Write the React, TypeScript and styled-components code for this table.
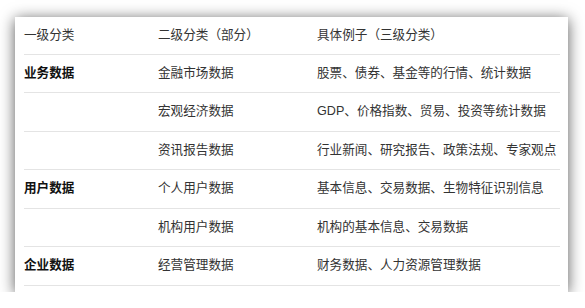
import React from 'react';
import styled, { createGlobalStyle } from 'styled-components';

type RowData = {
   level1?: string;
   level2: string;
   examples: string;
};

const rows: RowData[] = [
   { level1: '业务数据', level2: '金融市场数据', examples: '股票、债券、基金等的行情、统计数据' },
   { level2: '宏观经济数据', examples: 'GDP、价格指数、贸易、投资等统计数据' },
   { level2: '资讯报告数据', examples: '行业新闻、研究报告、政策法规、专家观点' },
   { level1: '用户数据', level2: '个人用户数据', examples: '基本信息、交易数据、生物特征识别信息' },
   { level2: '机构用户数据', examples: '机构的基本信息、交易数据' },
   { level1: '企业数据', level2: '经营管理数据', examples: '财务数据、人力资源管理数据' },
];

const GlobalStyle = createGlobalStyle`
   html, body {
      margin: 0;
      background: #ffffff;
   }
   body {
      padding: 17px 17px 0 15px;
      font-family: "Liberation Sans", "Noto Sans CJK SC", sans-serif;
   }
`;

export default function App() {
   return (
      <>
         <GlobalStyle />
         <Card>
            <HeaderRow>
               <Cell>一级分类</Cell>
               <Cell>二级分类（部分）</Cell>
               <Cell>具体例子（三级分类）</Cell>
            </HeaderRow>
            {rows.map((row, i) => (
               <Row key={i}>
                  <Cell $bold>{row.level1}</Cell>
                  <Cell>{row.level2}</Cell>
                  <Cell>{row.examples}</Cell>
               </Row>
            ))}
         </Card>
      </>
   );
}

const Card = styled.div`
   width: 553px;
   height: 275px;
   box-sizing: border-box;
   padding: 0 8px 0 9px;
   background: #ffffff;
   box-shadow: 0 2px 14px rgba(0, 0, 0, 0.65);
`;

const Row = styled.div`
   display: grid;
   grid-template-columns: 134px 159px 1fr;
   align-items: center;
   height: 38.5px;
   box-sizing: border-box;
   border-bottom: 1px solid #e4e4e4;
`;

const HeaderRow = styled(Row)`
   height: 37.5px;
`;

const Cell = styled.div<{ $bold?: boolean }>`
   font-size: 12.6px;
   line-height: 1;
   white-space: nowrap;
   color: ${(p) => (p.$bold ? '#111111' : '#333333')};
   font-weight: ${(p) => (p.$bold ? 700 : 400)};
   font-family: "Liberation Sans", "Noto Sans CJK SC", sans-serif;
`;
